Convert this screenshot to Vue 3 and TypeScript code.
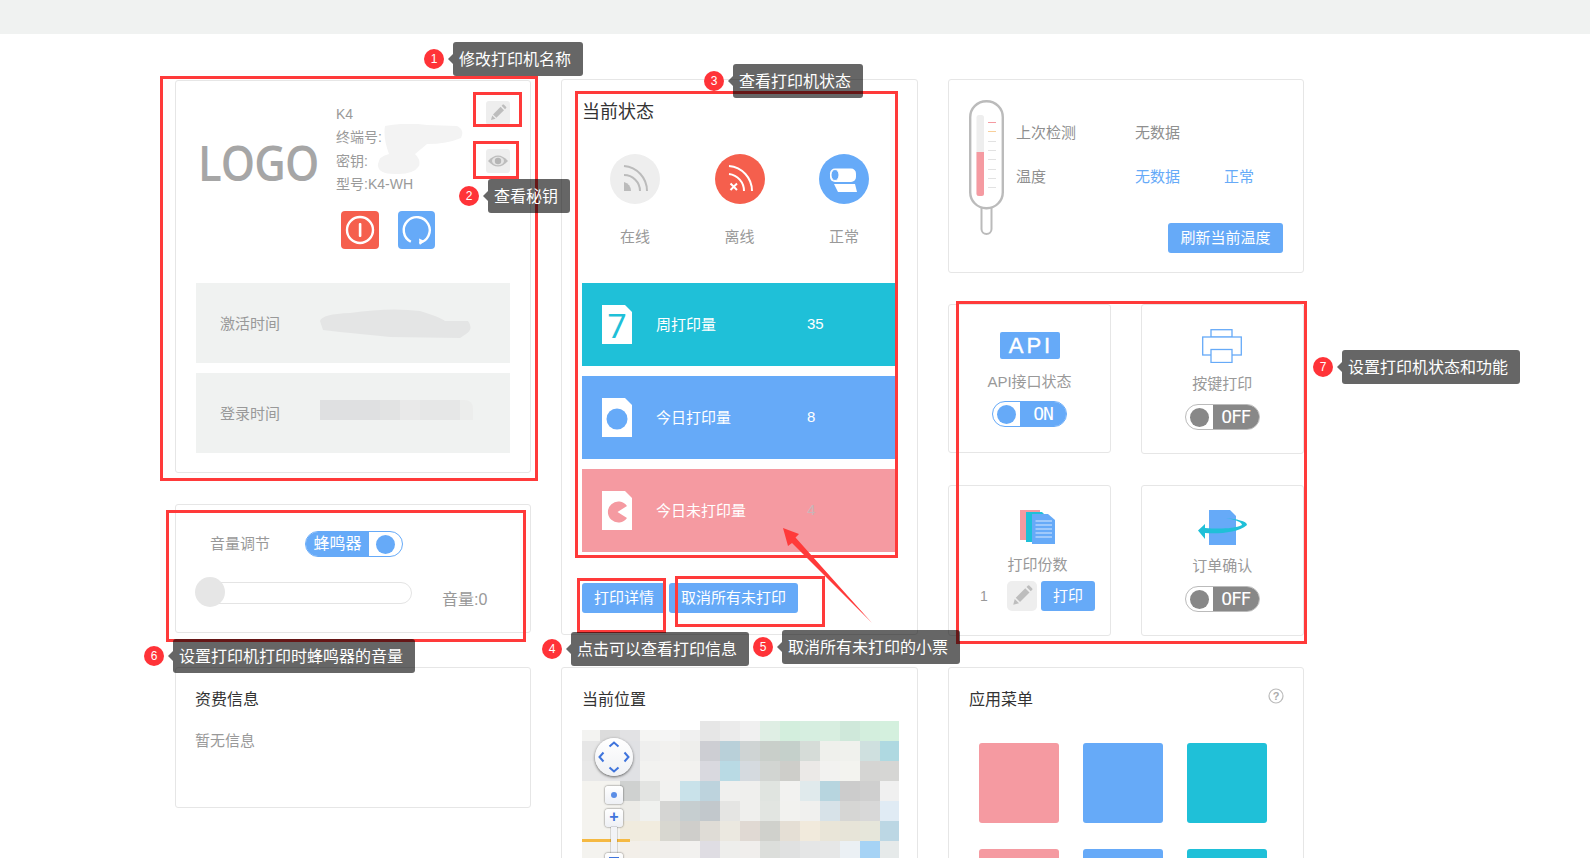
<script setup lang="ts">
interface Box { x: number; y: number; w: number; h: number }
interface Tip extends Box { text: string; n: number; bx: number; by: number }

const box = (b: Box) => ({ left: b.x + 'px', top: b.y + 'px', width: b.w + 'px', height: b.h + 'px' })

const frames: Box[] = [
  { x: 160, y: 76, w: 378, h: 405 },
  { x: 473, y: 92, w: 49, h: 35 },
  { x: 473, y: 141, w: 46, h: 38 },
  { x: 575, y: 91, w: 323, h: 467 },
  { x: 166, y: 510, w: 360, h: 132 },
  { x: 577, y: 578, w: 89, h: 55 },
  { x: 675, y: 576, w: 150, h: 51 },
  { x: 956, y: 301, w: 351, h: 343 }
]

const tips: Tip[] = [
  { n: 1, text: '修改打印机名称', x: 453, y: 42, w: 130, h: 34, bx: 434, by: 59 },
  { n: 2, text: '查看秘钥', x: 488, y: 179, w: 82, h: 34, bx: 469, by: 196 },
  { n: 3, text: '查看打印机状态', x: 733, y: 64, w: 130, h: 34, bx: 714, by: 81 },
  { n: 4, text: '点击可以查看打印信息', x: 571, y: 632, w: 178, h: 34, bx: 552, by: 649 },
  { n: 5, text: '取消所有未打印的小票', x: 782, y: 630, w: 178, h: 34, bx: 763, by: 647 },
  { n: 6, text: '设置打印机打印时蜂鸣器的音量', x: 173, y: 639, w: 242, h: 34, bx: 154, by: 656 },
  { n: 7, text: '设置打印机状态和功能', x: 1342, y: 350, w: 178, h: 34, bx: 1323, by: 367 }
]

const statuses = [
  { label: '在线', kind: 'on' },
  { label: '离线', kind: 'off' },
  { label: '正常', kind: 'roll' }
]

const counters = [
  { label: '周打印量', value: '35', kind: 'week' },
  { label: '今日打印量', value: '8', kind: 'today' },
  { label: '今日未打印量', value: '4', kind: 'left' }
]

const menu = ['pink', 'blue', 'teal', 'pink', 'blue', 'teal']

const ticks = [22, 31, 41, 50, 59, 69, 78, 87]
const tickColor = (i: number) => (i === 0 ? '#f59aa1' : i === 1 ? '#f8cf9a' : '#e2e2e2')

const mosaic: string[][] = [
  ['f3f3f1', 'dcdcdc', 'e2e2e4', 'f5f5f3', 'f5f5f5', 'f0f0f0', 'e6e6e6', 'ebebeb', 'f0f0f0', 'dfeee4', 'd3eedd', 'd6eee0', 'd8eee0', 'cfe8da', 'd3eedd', 'd4f0de'],
  ['e6e6e6', 'e2e2e4', 'e0e1e4', 'efefee', 'f2f1ef', 'eeeeec', 'cdced3', 'b9d0d9', 'cfd4d4', 'c9cfca', 'c5d0cb', 'd6dcd8', 'eff0ec', 'f0f1ed', 'cfe0df', 'afd9e1'],
  ['e8e8e8', 'e6e6e8', 'e0e1e4', 'f2f2f0', 'f3f2f0', 'f2f1ef', 'd9d9df', 'b9dae4', 'd5dadf', 'd2d5d2', 'cececa', 'ebe9e7', 'f2f2f0', 'f3f3ef', 'd5d5d3', 'd6d6d4'],
  ['f4f3ef', 'f4f3ef', 'cfd1d0', 'e3e4e2', 'f2f2f0', 'c9e2ea', 'bdd3dd', 'f0f0ee', 'efefed', 'e0e4e0', 'f2f2f0', 'e0eaec', 'b7d5df', 'cccccc', 'cfcfcf', 'f0f0f0'],
  ['f4f3ef', 'f4f3ef', 'ecebe7', 'f0f1ef', 'd5d5d3', 'c6ced0', 'c2c8cc', 'e5e5e3', 'efefed', 'e2e5e1', 'f2f2ef', 'f0f0ee', 'd7e2e8', 'd6d6d4', 'd8d8d8', 'e0ebf4'],
  ['f4f3ef', 'f4f3ef', 'f0ebde', 'f1ecdf', 'd8d7d0', 'cfcecb', 'dfdcd6', 'ebe8e0', 'e0d9d3', 'd0d1cc', 'e5dfd5', 'f1eadc', 'e9e5d8', 'e7e4d8', 'e6e6da', 'bcd7e4'],
  ['f4f3ef', 'f4f3ef', 'f3efe9', 'f1efea', 'f0eeeb', 'f2f1ef', 'dfdde3', 'eeeeec', 'f0eeec', 'dcdedb', 'e0e1e1', 'e5e6e6', 'e6e7e7', 'ebf0f4', 'a6d3f5', 'e6eaea']
]
const cellStyle = (c: string, r: number, i: number) => ({
  background: r === 0 && i < 6 ? `linear-gradient(#fff 45%, #${c} 45%)` : `#${c}`
})
</script>

<template>
  <div class="page">
    <div class="topbar"></div>

    <main class="columns">
      <!-- left column -->
      <section class="col col-left">
        <div class="card device">
          <div class="profile">
            <div class="logo">LOGO</div>
            <div class="info">
              <div class="line">K4</div>
              <div class="line">终端号:</div>
              <div class="line">密钥:</div>
              <div class="line">型号:K4-WH</div>
              <div class="actions">
                <span class="square red">
                  <svg width="38" height="38" viewBox="0 0 38 38">
                    <circle cx="19" cy="19" r="13" fill="none" stroke="#fff" stroke-width="2.4" />
                    <rect x="17.8" y="12" width="2.6" height="14" rx="1" fill="#fff" />
                  </svg>
                </span>
                <span class="square blue">
                  <svg width="37" height="38" viewBox="0 0 37 38">
                    <path d="M23 31.4A13 13 0 1 0 14.5 31.4" fill="none" stroke="#fff" stroke-width="2.4" transform="rotate(8 18.5 19)" />
                    <path d="M21 27.5l5.5 2.6-4.6 4z" fill="#fff" />
                  </svg>
                </span>
              </div>
              <svg class="smudge-id" width="90" height="54" viewBox="0 0 90 54">
                <path d="M8 2Q30 -2 50 1L80 2Q88 6 84 14Q70 20 50 20L38 30Q44 36 42 42Q36 51 18 50Q0 50 1 40Q2 32 12 30Q6 14 8 2Z" fill="#f3f3f3" />
              </svg>
            </div>
            <div class="tools">
              <span class="tool">
                <svg width="24" height="24" viewBox="0 0 24 24">
                  <path d="M5 19l1.2-4.6 3.4 3.4z" fill="#bdbdbd" />
                  <path d="M7 13.4l7.6-7.6 3.4 3.4-7.6 7.600z" fill="#bdbdbd" />
                  <path d="M15.6 4.8l1.2-1.2q.5-.4 1 0l2.400 2.400q.4.5 0 1L19 8.200z" fill="#bdbdbd" />
                </svg>
              </span>
              <span class="tool">
                <svg width="24" height="24" viewBox="0 0 24 24">
                  <path d="M2 12Q12 1 22 12Q12 23 2 12Z" fill="#bdbdbd" />
                  <ellipse cx="12" cy="12" rx="6" ry="4.200" fill="#e4e4e4" />
                  <circle cx="12" cy="12" r="3.200" fill="#b5b5b5" />
                </svg>
              </span>
            </div>
          </div>
          <div class="time-row">
            <span class="time-label">激活时间</span>
            <svg class="smudge-time" width="154" height="32" viewBox="0 0 154 32">
              <path d="M0 12Q2 5 30 4Q70 -2 100 2Q120 8 125 12L148 12Q154 20 146 25L140 29L70 28Q40 25 20 23L3 21Z" fill="#e4e5e5" />
            </svg>
          </div>
          <div class="time-row">
            <span class="time-label">登录时间</span>
            <div class="smudge-login"></div>
          </div>
        </div>

        <div class="card volume">
          <div class="volume-head">
            <span class="volume-title">音量调节</span>
            <span class="toggle buzzer">
              <span class="toggle-label buzzer-label">蜂鸣器</span>
              <span class="toggle-knob-wrap"><i class="knob"></i></span>
            </span>
          </div>
          <div class="volume-body">
            <div class="slider"><i class="slider-knob"></i></div>
            <span class="volume-value">音量:0</span>
          </div>
        </div>

        <div class="card fee">
          <h3 class="title">资费信息</h3>
          <p class="muted">暂无信息</p>
        </div>
      </section>

      <!-- middle column -->
      <section class="col col-mid">
        <div class="card state">
          <h2 class="title big">当前状态</h2>
          <div class="status-list">
            <div v-for="s in statuses" :key="s.kind" class="status">
              <svg v-if="s.kind === 'on'" width="50" height="50" viewBox="0 0 50 50">
                <circle cx="25" cy="25" r="25" fill="#eee" />
                <path d="M14 12A25 25 0 0 1 37 37M14 21A16 16 0 0 1 30 37" fill="none" stroke="#bbb" stroke-width="2" />
                <path d="M14 28A9 9 0 0 1 21 37H14Z" fill="#bbb" />
              </svg>
              <svg v-else-if="s.kind === 'off'" width="50" height="50" viewBox="0 0 50 50">
                <circle cx="25" cy="25" r="25" fill="#f55f4d" />
                <path d="M14 12A25 25 0 0 1 37 37M14 20A17 17 0 0 1 29 37" fill="none" stroke="#fff" stroke-width="2" />
                <path d="M15.500 29.500l6.500 6.500M22 29.500l-6.500 6.500" stroke="#fff" stroke-width="2" />
              </svg>
              <svg v-else width="50" height="50" viewBox="0 0 50 50">
                <circle cx="25" cy="25" r="25" fill="#66aaf8" />
                <rect x="11" y="14.500" width="26" height="13.500" rx="5" fill="#fff" />
                <ellipse cx="16" cy="21" rx="4" ry="5.500" fill="#66aaf8" stroke="#fff" stroke-width="1" />
                <path d="M15 30H36L38 38H19Z" fill="#fff" />
              </svg>
              <span class="status-label">{{ s.label }}</span>
            </div>
          </div>
          <div class="counters">
            <div v-for="c in counters" :key="c.kind" class="counter" :class="c.kind">
              <svg class="doc" width="30" height="39" viewBox="0 0 30 39">
                <path d="M0 0H23L30 7V39H0Z" fill="#fff" />
                <text v-if="c.kind === 'week'" x="15" y="33" text-anchor="middle" class="seven">7</text>
                <circle v-else-if="c.kind === 'today'" cx="15" cy="21" r="10.500" fill="#66aaf8" />
                <path v-else d="M25 15A10.500 10.500 0 1 0 25 27L15.500 21Z" fill="#f59aa1" />
              </svg>
              <span class="counter-label">{{ c.label }}</span>
              <span class="counter-value">{{ c.value }}</span>
            </div>
          </div>
          <div class="buttons">
            <button class="btn">打印详情</button>
            <button class="btn">取消所有未打印</button>
          </div>
        </div>

        <div class="card location">
          <h3 class="title">当前位置</h3>
          <div class="map">
            <div v-for="(row, r) in mosaic" :key="r" class="map-row">
              <i v-for="(c, i) in row" :key="i" class="cell" :style="cellStyle(c, r, i)"></i>
            </div>
            <i class="road"></i>
            <div class="pan">
              <svg width="38" height="38" viewBox="0 0 38 38">
                <path d="M14.500 8.500L19 4.500L23.500 8.500M14.500 29.500L19 33.500L23.500 29.500M8.500 14.500L4.500 19L8.500 23.500M29.500 14.500L33.500 19L29.500 23.500" fill="none" stroke="#3f74dc" stroke-width="2" />
              </svg>
            </div>
            <div class="map-btn locate"><i></i></div>
            <div class="map-btn plus">+</div>
            <i class="zoom-track"></i>
            <div class="map-btn minus"></div>
          </div>
        </div>
      </section>

      <!-- right column -->
      <section class="col col-right">
        <div class="card temp">
          <svg class="thermo" width="35" height="135" viewBox="0 0 35 135">
            <path d="M12.500 108V129A5 5 0 0 0 22.500 129V108" fill="none" stroke="#bbb" stroke-width="2" />
            <rect x="1.200" y="1.200" width="32.600" height="107" rx="16" fill="#fff" stroke="#bbb" stroke-width="2.400" />
            <rect x="7.500" y="15" width="7.500" height="81" rx="2.500" fill="#eee" />
            <path d="M7.500 52H15V93.500A2.500 2.500 0 0 1 12.500 96H10A2.500 2.500 0 0 1 7.500 93.500Z" fill="#f59aa1" />
            <rect v-for="(t, i) in ticks" :key="t" x="19" :y="t" width="8" height="1" :fill="tickColor(i)" />
          </svg>
          <div class="temp-body">
            <div class="temp-row">
              <span class="t1">上次检测</span><span class="t2">无数据</span>
            </div>
            <div class="temp-row">
              <span class="t1">温度</span><span class="t2 link">无数据</span><span class="link">正常</span>
            </div>
            <button class="btn refresh">刷新当前温度</button>
          </div>
        </div>

        <div class="tiles">
          <div class="tile api-tile">
            <span class="api-badge">API</span>
            <span class="tile-label">API接口状态</span>
            <span class="toggle on">
              <span class="toggle-knob-wrap"><i class="knob"></i></span>
              <span class="toggle-label">ON</span>
            </span>
          </div>
          <div class="tile key-tile">
            <svg width="40" height="34" viewBox="0 0 40 34" fill="none" stroke="#66aaf8" stroke-width="1.300">
              <rect x="9" y=".7" width="21" height="7.500" fill="#fff" />
              <rect x=".7" y="8" width="38.600" height="18" fill="#fff" />
              <rect x="9" y="20.500" width="21" height="13" fill="#fff" />
            </svg>
            <span class="tile-label">按键打印</span>
            <span class="toggle off">
              <span class="toggle-knob-wrap"><i class="knob"></i></span>
              <span class="toggle-label">OFF</span>
            </span>
          </div>
          <div class="tile copies-tile">
            <div class="copies-head">
              <svg width="35" height="34" viewBox="0 0 35 34">
                <rect x="0" y="0" width="20" height="30" fill="#f59aa1" />
                <path d="M6 2H22L26 6V32H6Z" fill="#1fc0d8" />
                <path d="M12 4H28L35 10V34H12Z" fill="#66aaf8" />
                <path d="M15.500 11H32M15.500 15H32M15.500 19H32M15.500 23H32M15.500 27H32" stroke="#d7e8fd" stroke-width="1.200" />
              </svg>
              <span class="tile-label">打印份数</span>
            </div>
            <div class="copies-row">
              <span class="copies-num">1</span>
              <span class="tool large">
                <svg width="30" height="30" viewBox="0 0 24 24">
                  <path d="M5 19l1.200-4.600 3.400 3.400z" fill="#bdbdbd" />
                  <path d="M7 13.400l7.600-7.600 3.400 3.400-7.600 7.600z" fill="#bdbdbd" />
                  <path d="M15.600 4.800l1.200-1.200q.5-.4 1 0l2.400 2.400q.4.5 0 1L19 8.200z" fill="#bdbdbd" />
                </svg>
              </span>
              <button class="btn small">打印</button>
            </div>
          </div>
          <div class="tile confirm-tile">
            <svg width="49" height="35" viewBox="0 0 49 35">
              <path d="M11 0H32L38 6V35H11Z" fill="#66aaf8" />
              <path d="M7 23C20 24 40 23 49 15C49 11 38 9 28 8C38 10 44 12 44 15C36 19 20 19 7 18V14L0 20.500L7 29Z" fill="#1fc0d8" />
            </svg>
            <span class="tile-label">订单确认</span>
            <span class="toggle off">
              <span class="toggle-knob-wrap"><i class="knob"></i></span>
              <span class="toggle-label">OFF</span>
            </span>
          </div>
        </div>

        <div class="card apps">
          <h3 class="title">应用菜单</h3>
          <svg class="help" width="16" height="16" viewBox="0 0 16 16">
            <circle cx="8" cy="8" r="7" fill="none" stroke="#bbb" stroke-width="1.200" />
            <text x="8" y="11.800" text-anchor="middle" class="help-mark">?</text>
          </svg>
          <div class="app-grid">
            <i v-for="(m, i) in menu" :key="i" class="app" :class="m"></i>
          </div>
        </div>
      </section>
    </main>

    <!-- annotations drawn over the screenshot -->
    <svg class="arrow" width="110" height="110" viewBox="0 0 110 110">
      <path d="M2 2L18 8L14.500 11.500L91 97L11 17L7 20Z" fill="#ff3a3a" />
    </svg>
    <i v-for="(f, i) in frames" :key="'f' + i" class="frame" :style="box(f)"></i>
    <template v-for="t in tips" :key="t.n">
      <span class="badge" :style="{ left: t.bx - 10 + 'px', top: t.by - 10 + 'px' }">{{ t.n }}</span>
      <span class="tip" :style="box(t)">{{ t.text }}</span>
    </template>
  </div>
</template>

<style>
html, body { margin: 0; background: #fff; }
</style>

<style scoped>
.page {
  position: relative;
  height: 858px;
  overflow: hidden;
  font-family: "Liberation Sans", "Noto Sans CJK SC", sans-serif;
  color: #999;
  font-size: 15px;
}
.topbar { height: 34px; background: #f0f2f1; }
.columns {
  display: flex;
  gap: 31px;
  padding: 45px 0 0 175px;
}
.col { width: 355.5px; display: flex; flex-direction: column; flex: none; }
.col-left { padding-top: 1px; }
.col-mid { width: 356.5px; margin-left: -0.5px; margin-right: -0.5px; }
.card {
  box-sizing: border-box;
  border: 1.5px solid #e6e6e6;
  border-radius: 3px;
  background: #fff;
  position: relative;
}
.title { margin: 0; font-weight: 400; font-size: 16px; color: #333; line-height: 24px; }
.title.big { font-size: 18px; line-height: 26px; }

/* device card */
.device { height: 393px; padding: 0 20px; }
.profile { display: flex; height: 202px; position: relative; }
.logo {
  width: 140px;
  flex: none;
  box-sizing: border-box;
  padding: 48px 0 0 2px;
  font-family: "Open Sans", sans-serif;
  font-size: 49px;
  font-weight: 600;
  line-height: 66px;
  color: #a6a6a6;
  letter-spacing: -1px;
  transform: scaleX(0.89);
  transform-origin: 2px 0;
}
.info { padding-top: 21.5px; width: 150px; position: relative; font-size: 14px; }
.line { line-height: 23.5px; color: #9a9a9a; }
.actions { display: flex; gap: 19px; margin: 14px 0 0 5px; }
.square { display: block; height: 38px; border-radius: 4px; overflow: hidden; }
.square.red { background: #f55f4d; width: 38px; }
.square.blue { background: #66aaf8; width: 37px; }
.square svg { display: block; }
.smudge-id { position: absolute; left: 41px; top: 43px; }
.tools { display: flex; flex-direction: column; gap: 24px; padding-top: 20px; }
.tool {
  display: flex;
  width: 24px;
  height: 24px;
  background: #eee;
  border-radius: 3px;
}
.tool.large { width: 30px; height: 30px; border-radius: 5px; }
.time-row {
  position: relative;
  height: 80px;
  margin-bottom: 10px;
  background: #f0f2f1;
  display: flex;
  align-items: center;
  padding-left: 24px;
  color: #999;
}
.time-label { margin-bottom: 2px; }
.smudge-time { position: absolute; left: 124px; top: 26px; }
.smudge-login {
  position: absolute;
  left: 124px;
  top: 27px;
  width: 153px;
  height: 20px;
  border-radius: 0 8px 0 0;
  background: linear-gradient(90deg, #dfe0e1 0 60px, #e2e3e3 60px 80px, #e9e9e9 80px 100px, #e6e7e7 100px 140px, #ecedec 140px);
}

/* volume */
.volume { height: 129px; margin-top: 31px; padding: 26px 19px 0 20px; }
.volume-head { display: flex; align-items: center; gap: 35px; padding-left: 14px; }
.volume-body { display: flex; align-items: center; margin-top: 18px; position: relative; }
.volume-title { color: #999; margin-bottom: 3px; }
.slider {
  box-sizing: border-box;
  width: 216px;
  height: 22px;
  border: 1.5px solid #e4e4e4;
  border-radius: 11px;
  position: relative;
}
.slider-knob {
  position: absolute;
  left: -2px;
  top: -6px;
  width: 30px;
  height: 30px;
  border-radius: 50%;
  background: #e6e6e6;
}
.volume-value { margin: 11px 0 0 30px; font-size: 16px; color: #999; }

/* toggle */
.toggle {
  box-sizing: border-box;
  display: inline-flex;
  width: 75px;
  height: 26px;
  border-radius: 13px;
  overflow: hidden;
  border: 1px solid #bbb;
  background: #fff;
}
.toggle-knob-wrap { flex: none; width: 27px; display: flex; align-items: center; justify-content: center; }
.knob { display: block; width: 19px; height: 19px; border-radius: 50%; background: #888; }
.toggle-label {
  flex: 1;
  background: #888;
  color: #fff;
  font-family: "DejaVu Sans Mono", monospace;
  font-size: 18px;
  letter-spacing: -1.2px;
  line-height: 24px;
  text-align: center;
}
.toggle.on { border-color: #66aaf8; }
.toggle.on .knob, .buzzer .knob { background: #66aaf8; }
.toggle.on .toggle-label { background: #66aaf8; }
.toggle.buzzer { width: 98px; border-color: #66aaf8; }
.toggle-label.buzzer-label {
  flex: none;
  width: 63px;
  background: #66aaf8;
  font-family: inherit;
  font-size: 16px;
  letter-spacing: 0;
}
.buzzer .toggle-knob-wrap { flex: 1; }

/* fee */
.fee { height: 141px; margin-top: 34px; padding: 20px 19px; }
.muted { margin: 17px 0 0; color: #999; line-height: 24px; }

/* state */
.state { height: 556px; padding: 19px 0 0 20px; overflow: hidden; }
.state .title { line-height: 26px; }
.status-list { display: flex; margin-top: 29px; padding-left: 28px; gap: 54.5px; }
.status { width: 50px; display: flex; flex-direction: column; align-items: center; }
.status svg { display: block; }
.status-label { margin-top: 22px; line-height: 22px; white-space: nowrap; }
.counters { margin-top: 35px; display: flex; flex-direction: column; gap: 10px; }
.counter {
  display: flex;
  align-items: center;
  height: 83px;
  width: 314px;
  padding-left: 20px;
  box-sizing: border-box;
  color: #fff;
}
.counter.week { background: #1fc0d8; }
.counter.today { background: #66aaf8; }
.counter.left { background: #f59aa1; }
.doc { flex: none; overflow: visible; }
.seven { font-family: Roboto, sans-serif; font-weight: 400; font-size: 34px; fill: #1fc0d8; }
.counter-label { margin: 0 0 2px 24px; width: 151px; }
.counter-value { font-size: 15px; margin-bottom: 2px; }
.counter.left .counter-value { color: #c9b5b8; }
.buttons { display: flex; gap: 3px; margin-top: 31px; }
.btn {
  display: block;
  height: 30px;
  padding: 0 12px;
  border: 0;
  border-radius: 3px;
  background: #66aaf8;
  color: #fff;
  font: inherit;
  line-height: 30px;
  white-space: nowrap;
}

/* location */
.location { height: 210px; margin-top: 32px; padding: 20px 0 0 20px; }
.map { position: relative; width: 317px; margin-top: 9px; overflow: hidden; }
.map-row { display: flex; height: 20px; }
.cell { display: block; flex: none; width: 20px; }
.cell:first-child { width: 18px; }
.road { position: absolute; left: 0; top: 118px; width: 48px; height: 3px; background: #f5b942; }
.pan {
  position: absolute;
  left: 13px;
  top: 17px;
  width: 38px;
  height: 38px;
  border-radius: 50%;
  background: linear-gradient(#fff, #f0f1f4);
  box-shadow: 0 1px 3px rgba(0, 0, 0, 0.6);
}
.pan svg { display: block; }
.map-btn {
  position: absolute;
  left: 23px;
  width: 18px;
  height: 18px;
  box-sizing: border-box;
  background: linear-gradient(#fff, #eef0f5);
  border-radius: 3px;
  box-shadow: 0 0 2px rgba(0, 0, 0, 0.7);
  color: #3f74dc;
  font: bold 16px/16px "Liberation Sans", sans-serif;
  text-align: center;
}
.locate { top: 65px; }
.locate i { display: block; width: 6px; height: 6px; margin: 6px; border-radius: 50%; background: #5b8ee6; }
.plus { top: 88px; }
.minus { top: 132px; }
.minus::before { content: ""; display: block; width: 10px; height: 2px; margin: 4px 4px 0; background: #3f74dc; }
.zoom-track { position: absolute; left: 29px; top: 106px; width: 6px; height: 26px; background: #f2f3f6; box-shadow: 0 0 1px rgba(0, 0, 0, 0.7); }

/* temperature */
.temp { height: 194px; display: flex; padding: 20px 0 0 20px; }
.thermo { flex: none; }
.temp-body { flex: 1; padding: 21px 20px 0 12px; display: flex; flex-direction: column; }
.temp-row { display: flex; line-height: 24px; margin-bottom: 20px; color: #8f8f8f; }
.t1 { width: 119px; }
.t2 { width: 89px; }
.link { color: #66aaf8; }
.btn.refresh { align-self: flex-end; margin-top: 14px; }

/* tiles */
.tiles {
  display: grid;
  grid-template-columns: 163px 162.5px;
  grid-template-rows: 150px 151px;
  gap: 31px 30px;
  margin-top: 31px;
}
.tile {
  box-sizing: border-box;
  border: 1.5px solid #e6e6e6;
  border-radius: 3px;
  display: flex;
  flex-direction: column;
  align-items: center;
}
.tile-label { color: #999; line-height: 22px; white-space: nowrap; }
.api-tile { padding-top: 27px; height: 149px; }
.api-badge {
  width: 60px;
  height: 27px;
  border-radius: 2px;
  background: #66aaf8;
  color: #fff;
  font-size: 22px;
  font-weight: 400;
  -webkit-text-stroke: 0.4px #fff;
  line-height: 27px;
  text-align: center;
  letter-spacing: 3px;
  text-indent: 3px;
}
.api-tile .tile-label { margin-top: 12px; }
.api-tile .toggle { margin-top: 8px; }
.key-tile { padding-top: 24px; }
.key-tile svg { display: block; }
.key-tile .tile-label { margin-top: 10px; }
.key-tile .toggle { margin-top: 9px; }
.copies-tile { padding-top: 24px; align-items: stretch; }
.copies-head { display: flex; flex-direction: column; align-items: center; padding-left: 16px; }
.copies-head svg { display: block; }
.copies-head .tile-label { margin-top: 10px; }
.copies-row { display: flex; align-items: center; margin-top: 5px; padding-left: 31px; }
.copies-num { width: 27px; color: #999; font-size: 14px; }
.btn.small { width: 54px; margin-left: 4px; padding: 0; text-align: center; }
.confirm-tile { padding-top: 24px; }
.confirm-tile svg { display: block; }
.confirm-tile .tile-label { margin-top: 10px; }
.confirm-tile .toggle { margin-top: 9px; }

/* apps */
.apps { height: 210px; margin-top: 31px; padding: 20px 0 0 20px; }
.help { position: absolute; right: 19px; top: 20px; }
.help-mark { font: bold 11px "Liberation Sans", sans-serif; fill: #aaa; }
.app-grid {
  display: grid;
  grid-template-columns: repeat(3, 80px);
  gap: 26px 24px;
  margin: 31px 0 0 10px;
}
.app { display: block; height: 80px; border-radius: 3px; }
.app.pink { background: #f59aa1; }
.app.blue { background: #66aaf8; }
.app.teal { background: #1fc0d8; }

/* annotations */
.frame {
  position: absolute;
  box-sizing: border-box;
  border: 3px solid #ff3a3a;
}
.arrow { position: absolute; left: 781px; top: 526px; }
.badge {
  position: absolute;
  width: 20px;
  height: 20px;
  border-radius: 50%;
  background: #ff3338;
  color: #fff;
  font-size: 12px;
  line-height: 20px;
  text-align: center;
}
.tip {
  position: absolute;
  box-sizing: border-box;
  padding-left: 6px;
  background: rgba(0, 0, 0, 0.6);
  border-radius: 3px;
  color: #fff;
  font-size: 16px;
  line-height: 36px;
  white-space: nowrap;
}
.tip::before {
  content: "";
  position: absolute;
  left: -5px;
  top: 12px;
  border-style: solid;
  border-width: 5px 5px 5px 0;
  border-color: transparent rgba(0, 0, 0, 0.6) transparent transparent;
}
</style>
